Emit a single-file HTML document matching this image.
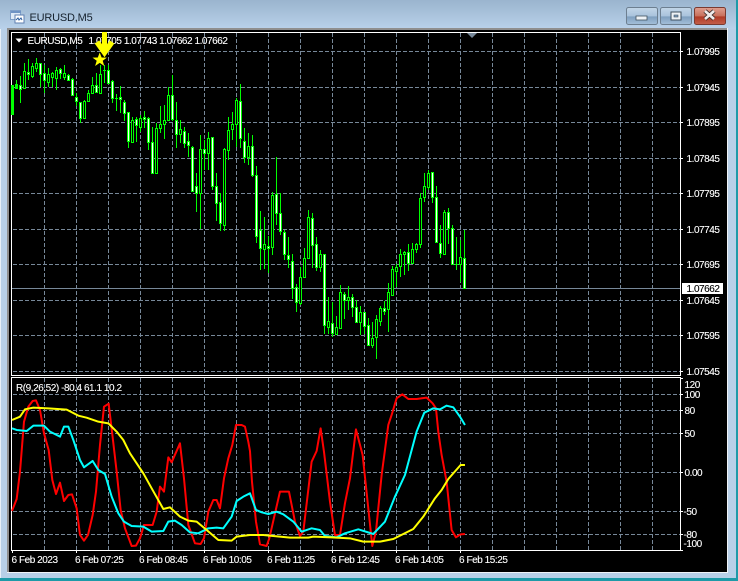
<!DOCTYPE html>
<html><head><meta charset="utf-8"><style>
html,body{margin:0;padding:0;background:#b8d0e8}
body{width:738px;height:581px;overflow:hidden}
svg{display:block}
text{font-family:"Liberation Sans",sans-serif;font-size:10px;fill:#fff;letter-spacing:-.45px;stroke:#fff;stroke-width:.12px}
</style></head><body>
<svg width="738" height="581" viewBox="0 0 738 581" xmlns="http://www.w3.org/2000/svg">
<defs>
<linearGradient id="tb" x1="0" y1="0" x2="0" y2="1"><stop offset="0" stop-color="#9ab4ce"/><stop offset="1" stop-color="#b9d1ea"/></linearGradient>
<linearGradient id="bt" x1="0" y1="0" x2="0" y2="1"><stop offset="0" stop-color="#c3d6e8"/><stop offset=".5" stop-color="#a9c3dc"/><stop offset=".55" stop-color="#7f9fbf"/><stop offset="1" stop-color="#a5c0da"/></linearGradient>
<linearGradient id="cl" x1="0" y1="0" x2="0" y2="1"><stop offset="0" stop-color="#e0a090"/><stop offset=".5" stop-color="#c8705c"/><stop offset=".55" stop-color="#b03a26"/><stop offset="1" stop-color="#c4604a"/></linearGradient>
</defs>
<rect width="738" height="581" fill="#b8d0e8"/>
<rect width="738" height="29" fill="url(#tb)"/>
<rect x="0" y="29" width="1" height="552" fill="#e8f0f8"/>
<rect x="7" y="28" width="721" height="2" fill="#8f8f8f"/>
<rect x="7" y="28" width="2" height="545" fill="#8f8f8f"/>
<rect x="727" y="28" width="1" height="545" fill="#f0f4f8"/>
<rect x="7" y="572" width="721" height="1" fill="#f0f4f8"/>
<rect x="0" y="578" width="738" height="3" fill="#1e9aa8"/>
<rect x="736" y="0" width="2" height="581" fill="#1e9aa8"/>
<rect x="9" y="30" width="718" height="542" fill="#000"/>

<!-- title icon -->
<rect x="10.500" y="10.500" width="10" height="9" fill="#dfeaf6" stroke="#7f9fc8"/>
<rect x="15" y="15" width="9" height="8" fill="#fff" stroke="#5f7fb0"/>
<path d="M16 20l2-2 1 2 2-2 1 2" stroke="#3060a0" fill="none"/>
<rect x="11" y="11" width="10" height="2" fill="#6f93c4"/>
<text x="29.500" y="21" style="font-size:11px;fill:#16222e;stroke:none;letter-spacing:-.2px">EURUSD,M5</text>

<!-- window buttons -->
<rect x="626.500" y="7.500" width="31" height="17" rx="2" fill="url(#bt)" stroke="#6d7f90"/>
<rect x="636" y="16" width="11" height="4" fill="#eef2f6" stroke="#40505e" stroke-width=".8"/>
<rect x="660.500" y="7.500" width="31" height="17" rx="2" fill="url(#bt)" stroke="#6d7f90"/>
<rect x="671" y="12" width="10" height="8" fill="#eef2f6" stroke="#40505e"/>
<rect x="674" y="15" width="4" height="2" fill="#7f9fbf" stroke="#40505e" stroke-width=".6"/>
<rect x="694.500" y="7.500" width="31" height="17" rx="2" fill="url(#cl)" stroke="#7a3a30"/>
<path d="M705 11l9 8M714 11l-9 8" stroke="#40302c" stroke-width="4.400"/>
<path d="M705 11l9 8M714 11l-9 8" stroke="#f0ecec" stroke-width="2.600"/>

<!-- frames -->
<path d="M11.500 32.500H680.500V375.500H11.500Z M11.500 377.500H680.500V550.500H11.500Z" fill="none" stroke="#fff"/>

<!-- grid -->
<g fill="none" stroke="#778899" stroke-dasharray="4 2" shape-rendering="crispEdges">
<path d="M13 51.500H680M13 87.500H680M13 122.500H680M13 158.500H680M13 193.500H680M13 229.500H680M13 264.500H680M13 300.500H680M13 335.500H680M13 371.500H680"/>
<path d="M44.500 33V375M76.500 33V375M108.500 33V375M140.500 33V375M172.500 33V375M204.500 33V375M236.500 33V375M268.500 33V375M300.500 33V375M332.500 33V375M364.500 33V375M396.500 33V375M428.500 33V375M460.500 33V375M492.500 33V375M524.500 33V375M556.500 33V375M588.500 33V375M620.500 33V375M652.500 33V375"/>
<path d="M13 394.500H680M13 410.500H680M13 433.500H680M13 472.500H680M13 511.500H680M13 534.500H680"/>
<path d="M44.500 378V550M76.500 378V550M108.500 378V550M140.500 378V550M172.500 378V550M204.500 378V550M236.500 378V550M268.500 378V550M300.500 378V550M332.500 378V550M364.500 378V550M396.500 378V550M428.500 378V550M460.500 378V550M492.500 378V550M524.500 378V550M556.500 378V550M588.500 378V550M620.500 378V550M652.500 378V550"/>
</g>
<path d="M12 288.500H680" stroke="#778899" shape-rendering="crispEdges"/>
<path d="M467 33h10l-5 5z" fill="#778899"/>

<!-- ticks -->
<path d="M681 51.500h2M681 87.500h2M681 122.500h2M681 158.500h2M681 193.500h2M681 229.500h2M681 264.500h2M681 300.500h2M681 335.500h2M681 371.500h2M681 394.500h2M681 410.500h2M681 433.500h2M681 472.500h2M681 511.500h2M681 534.500h2M681 378.500h2M681 550.500h2M12.500 551v2M76.500 551v2M140.500 551v2M204.500 551v2M268.500 551v2M332.500 551v2M396.500 551v2M460.500 551v2" stroke="#fff" shape-rendering="crispEdges"/>

<!-- candles: wicks -->
<path shape-rendering="crispEdges" stroke="#0f0" fill="none" d="M12.5 85V115M16.5 80V88M20.5 76V103M24.5 63V89M28.5 59V80M32.5 63V78M36.5 58V72M40.5 63V87M44.5 65V93M48.5 68V87M52.5 72V87M56.5 67V90M60.5 68V79M64.5 65V80M68.5 74V81M72.5 78V96M76.5 93V106M80.5 102V123M84.5 100V118M88.5 90V102M92.5 77V93M96.5 73V92M100.5 65V93M104.5 65V83M108.5 65V83M112.5 80V103M116.5 94V111M120.5 86V113M124.5 100V121M128.5 112V148M132.5 117V142M136.5 117V142M140.5 115V132M144.5 111V128M148.5 117V150M152.5 127V174M156.5 123V174M160.5 106V133M164.5 105V139M168.5 87V120M172.5 75V121M176.5 102V148M180.5 120V143M184.5 127V148M188.5 133V157M192.5 146V192M196.5 173V212M200.5 135V229M204.5 140V170M208.5 132V170M212.5 137V190M216.5 173V221M220.5 193V231M224.5 148V231M228.5 117V160M232.5 112V140M236.5 98V147M240.5 84V148M244.5 128V163M248.5 133V165M252.5 135V177M256.5 166V243M260.5 211V270M264.5 217V269M268.5 236V273M272.5 192V255M276.5 157V225M280.5 193V235M284.5 230V260M288.5 237V268M292.5 254V299M296.5 284V312M300.5 267V305M304.5 248V277M308.5 210V258M312.5 213V268M316.5 237V271M320.5 250V272M324.5 254V334M328.5 297V334M332.5 302V337M336.5 316V334M340.5 285V328M344.5 292V319M348.5 286V310M352.5 294V317M356.5 300V323M360.5 306V335M364.5 312V334M368.5 318V346M372.5 322V348M376.5 315V359M380.5 306V326M384.5 301V315M388.5 283V332M392.5 266V295M396.5 264V287M400.5 249V277M404.5 251V275M408.5 244V271M412.5 243V263M416.5 243V253M420.5 193V248M424.5 173V202M428.5 170V190M432.5 172V203M436.5 186V242M440.5 225V258M444.5 210V254M448.5 208V244M452.5 225V264M456.5 237V270M460.5 240V282M464.5 230V288"/>
<!-- candles: bodies -->
<path shape-rendering="crispEdges" stroke="#0f0" stroke-width="3" fill="none" d="M12.5 85V115M16.5 84V89M20.5 85V90M24.5 71V89M28.5 72V75M32.5 66V77M36.5 63V69M40.5 63V75M44.5 73V81M48.5 74V83M52.5 73V78M56.5 70V79M60.5 69V74M64.5 73V78M68.5 75V81M72.5 79V96M76.5 97V102M80.5 102V119M84.5 101V119M88.5 93V102M92.5 85V94M96.5 85V93M100.5 74V94M104.5 70V71M108.5 70V84M112.5 81V99M116.5 98V99M120.5 97V100M124.5 102V114M128.5 112V142M132.5 120V143M136.5 119V126M140.5 118V128M144.5 117V120M148.5 118V143M152.5 142V174M156.5 128V174M160.5 124V129M164.5 120V125M168.5 95V121M172.5 95V120M176.5 120V135M180.5 129V135M184.5 131V144M188.5 141V146M192.5 147V192M196.5 186V194M200.5 149V194M204.5 149V154M208.5 138V154M212.5 137V187M216.5 186V204M220.5 202V224M224.5 149V226M228.5 130V151M232.5 124V130M236.5 100V125M240.5 101V139M244.5 141V158M248.5 146V158M252.5 146V176M256.5 175V237M260.5 230V249M264.5 244V250M268.5 246V249M272.5 195V248M276.5 194V214M280.5 213V232M284.5 232V255M288.5 255V260M292.5 261V289M296.5 287V303M300.5 277V304M304.5 258V278M308.5 217V259M312.5 218V246M316.5 244V268M320.5 254V268M324.5 254V326M328.5 321V328M332.5 323V334M336.5 327V335M340.5 292V329M344.5 294V301M348.5 297V301M352.5 297V308M356.5 307V323M360.5 312V323M364.5 312V327M368.5 325V346M372.5 338V346M376.5 319V338M380.5 308V322M384.5 308V312M388.5 292V310M392.5 269V296M396.5 267V272M400.5 254V267M404.5 252V255M408.5 252V264M412.5 249V264M416.5 244V250M420.5 198V245M424.5 186V198M428.5 173V188M432.5 172V198M436.5 197V243M440.5 243V254M444.5 212V255M448.5 212V229M452.5 228V265M456.5 264V265M460.5 257V265M464.5 258V289"/>
<!-- candles: white fill -->
<path shape-rendering="crispEdges" stroke="#fff" fill="none" d="M20.5 86V89M28.5 73V74M40.5 64V74M44.5 74V80M60.5 70V73M68.5 76V80M72.5 80V95M76.5 98V101M80.5 103V118M96.5 86V92M108.5 71V83M112.5 82V98M120.5 98V99M124.5 103V113M128.5 113V141M136.5 120V125M144.5 118V119M148.5 119V142M152.5 143V173M172.5 96V119M176.5 121V134M184.5 132V143M188.5 142V145M192.5 148V191M196.5 187V193M204.5 150V153M212.5 138V186M216.5 187V203M220.5 203V223M240.5 102V138M244.5 142V157M252.5 147V175M256.5 176V236M260.5 231V248M268.5 247V248M276.5 195V213M280.5 214V231M284.5 233V254M288.5 256V259M292.5 262V288M296.5 288V302M312.5 219V245M316.5 245V267M324.5 255V325M332.5 324V333M344.5 295V300M352.5 298V307M356.5 308V322M364.5 313V326M368.5 326V345M384.5 309V311M408.5 253V263M432.5 173V197M436.5 198V242M440.5 244V253M448.5 213V228M452.5 229V264M464.5 259V288"/>
<!-- candles: black fill -->
<path shape-rendering="crispEdges" stroke="#000" fill="none" d="M24.5 72V88M32.5 67V76M36.5 64V68M48.5 75V82M52.5 74V77M56.5 71V78M64.5 74V77M84.5 102V118M88.5 94V101M92.5 86V93M100.5 75V93M132.5 121V142M140.5 119V127M156.5 129V173M160.5 125V128M164.5 121V124M168.5 96V120M180.5 130V134M200.5 150V193M208.5 139V153M224.5 150V225M228.5 131V150M232.5 125V129M236.5 101V124M248.5 147V157M264.5 245V249M272.5 196V247M300.5 278V303M304.5 259V277M308.5 218V258M320.5 255V267M328.5 322V327M336.5 328V334M340.5 293V328M348.5 298V300M360.5 313V322M372.5 339V345M376.5 320V337M380.5 309V321M388.5 293V309M392.5 270V295M396.5 268V271M400.5 255V266M404.5 253V254M412.5 250V263M416.5 245V249M420.5 199V244M424.5 187V197M428.5 174V187M444.5 213V254M460.5 258V264"/>

<!-- oscillator lines -->
<g fill="none" stroke-width="6" stroke-linejoin="round" transform="translate(0 375) scale(.3333)">
<polyline stroke="#f00" points="36,408 50,372 60,290 72,140 85,95 98,78 108,76 120,105 132,175 146,225 157,315 168,357 180,323 192,378 205,360 216,358 230,400 240,480 252,497 264,480 278,420 288,350 300,210 312,95 326,86 336,170 350,290 362,405 375,460 395,513 408,512 420,490 432,450 458,450 470,410 480,335 492,350 505,247 515,262 540,205 552,310 565,450 585,505 602,507 612,490 625,410 640,375 650,375 660,400 672,310 685,250 697,210 708,150 725,150 735,155 745,200 750,228 756,320 768,440 780,508 800,513 808,490 840,350 867,350 885,440 900,483 910,470 935,260 950,228 962,160 972,230 990,380 1005,480 1020,480 1035,385 1050,310 1068,163 1088,240 1105,400 1117,513 1128,470 1145,300 1165,150 1175,120 1190,70 1207,58 1225,72 1250,72 1280,68 1298,85 1308,100 1315,170 1325,240 1340,320 1355,465 1368,487 1382,478 1395,477"/>
<polyline stroke="#0ff" points="36,160 50,165 80,168 100,152 132,152 150,170 180,185 192,155 205,155 220,195 240,255 252,277 278,258 295,285 315,297 335,365 355,415 372,440 395,453 430,455 455,470 490,468 505,440 525,437 545,450 570,472 595,475 625,460 650,458 670,460 695,425 710,378 730,365 750,355 768,405 785,412 805,417 830,410 850,418 880,440 905,470 935,460 960,465 975,483 1010,487 1035,475 1075,463 1120,477 1155,440 1185,365 1215,300 1250,170 1273,113 1300,100 1320,103 1340,92 1360,97 1380,125 1395,150"/>
<polyline stroke="#ff0" points="36,135 60,125 75,103 100,98 145,100 200,104 235,122 260,128 295,140 325,145 350,170 370,195 390,235 430,295 455,340 490,402 510,397 540,425 565,437 590,440 620,465 655,495 695,497 710,485 750,480 790,480 820,483 870,488 925,488 940,485 995,487 1050,490 1090,500 1140,500 1180,492 1240,462 1270,425 1305,370 1325,345 1345,312 1382,270 1395,270"/>
</g>

<!-- header text -->
<path d="M15.500 38.500h7l-3.500 4z" fill="#fff"/>
<text x="27.500" y="44">EURUSD,M5</text>
<text x="88.500" y="44">1.07705 1.07743 1.07662 1.07662</text>
<text x="16" y="391">R(9,26,52) -80.4 61.1 10.2</text>

<!-- arrow + star -->
<path d="M102 32h5v20h-5z" fill="#ff0"/>
<path d="M97 42l7.500 10.500 7.500-10.500" fill="none" stroke="#ff0" stroke-width="5.500"/>
<path d="M99.700 52.500l1.900 5 5.300.1-4.200 3.200 1.600 5.200-4.600-3.100-4.600 3.100 1.600-5.200-4.200-3.200 5.300-.1z" fill="#ff0"/>

<!-- price axis -->
<g>
<text x="686.500" y="55">1.07995</text>
<text x="686.500" y="91">1.07945</text>
<text x="686.500" y="126">1.07895</text>
<text x="686.500" y="162">1.07845</text>
<text x="686.500" y="197">1.07795</text>
<text x="686.500" y="233">1.07745</text>
<text x="686.500" y="268">1.07695</text>
<text x="686.500" y="304">1.07645</text>
<text x="686.500" y="339">1.07595</text>
<text x="686.500" y="375">1.07545</text>
</g>
<rect x="682" y="283" width="41" height="11" fill="#fff"/>
<text x="686.500" y="292" style="fill:#000;stroke:#000">1.07662</text>

<!-- indicator axis -->
<text x="684.500" y="388">120</text>
<text x="684.500" y="398">100</text>
<text x="684.500" y="414">80</text>
<text x="684.500" y="437">50</text>
<text x="684.500" y="476">0.00</text>
<text x="683.500" y="515">-50</text>
<text x="683.500" y="538">-80</text>
<text x="683.500" y="547">-100</text>

<!-- time axis -->
<text x="11.500" y="563">6 Feb 2023</text>
<text x="75" y="563">6 Feb 07:25</text>
<text x="139" y="563">6 Feb 08:45</text>
<text x="203" y="563">6 Feb 10:05</text>
<text x="267" y="563">6 Feb 11:25</text>
<text x="331" y="563">6 Feb 12:45</text>
<text x="395" y="563">6 Feb 14:05</text>
<text x="459" y="563">6 Feb 15:25</text>
</svg>
</body></html>
